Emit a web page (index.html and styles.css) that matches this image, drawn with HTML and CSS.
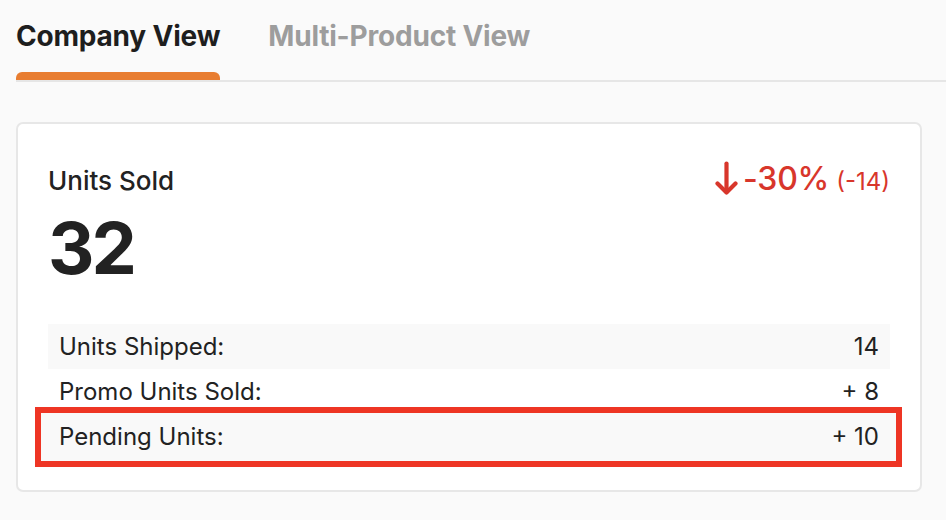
FILE: index.html
```html
<!DOCTYPE html>
<html lang="en">
<head>
<meta charset="utf-8">
<title>Units Sold</title>
<link rel="stylesheet" href="styles.css">
</head>
<body>
  <nav class="tabs">
    <div class="tab tab-active">Company View</div>
    <div class="tab">Multi-Product View</div>
  </nav>
  <section class="card">
    <div class="card-head">
      <div class="metric">
        <div class="metric-label">Units Sold</div>
        <div class="metric-value">32</div>
      </div>
      <div class="change">
        <svg class="change-icon" width="23" height="35" viewBox="0 0 23 35" aria-hidden="true">
          <path d="M11.5 2.5 V31" fill="none" stroke="#d8362b" stroke-width="4.2" stroke-linecap="round"/>
          <path d="M2.5 22.5 L11.5 31.5 L20.5 22.5" fill="none" stroke="#d8362b" stroke-width="4.2" stroke-linecap="round" stroke-linejoin="round"/>
        </svg>
        <span class="change-pct">-30%</span>
        <span class="change-abs">(-14)</span>
      </div>
    </div>
    <div class="rows">
      <div class="row row-shaded"><span>Units Shipped:</span><span>14</span></div>
      <div class="row"><span>Promo Units Sold:</span><span>+ 8</span></div>
      <div class="row row-shaded row-highlight"><span>Pending Units:</span><span>+ 10</span></div>
    </div>
  </section>
</body>
</html>
```
FILE: styles.css
```css
* { box-sizing: border-box; }
html, body { margin: 0; padding: 0; }
body {
  background: #fafafa;
  font-family: Inter, "Noto Sans", sans-serif;
  color: #222222;
  width: 946px;
  height: 520px;
  overflow: hidden;
}
.tabs {
  display: flex;
  gap: 48px;
  margin-left: 16px;
  border-bottom: 2px solid #e6e6e6;
  height: 82px;
}
.tab {
  position: relative;
  font-size: 28px;
  font-weight: 700;
  line-height: 34px;
  padding-top: 19px;
  color: #9d9d9d;
  letter-spacing: -0.2px;
}
.tab-active { color: #1e1e1e; }
.tab-active::after {
  content: "";
  position: absolute;
  left: 0;
  right: 0;
  bottom: 0;
  height: 8px;
  background: #e87d31;
  border-radius: 6px 6px 0 0;
}
.card {
  position: relative;
  z-index: 0;
  margin: 40px 24px 0 16px;
  background: #ffffff;
  border: 2px solid #e7e7e7;
  border-radius: 7px;
  padding: 41px 30px 30px 30px;
  height: 370px;
}
.card-head {
  display: flex;
  justify-content: space-between;
  align-items: flex-start;
}
.metric-label {
  font-size: 26px;
  line-height: 32px;
  font-weight: 500;
}
.metric-value {
  font-size: 72px;
  font-weight: 700;
  line-height: 80px;
  margin-top: 11px;
  letter-spacing: -3px;
}
.change {
  display: flex;
  align-items: baseline;
  color: #d8362b;
  margin-top: -4px;
}
.change-icon { align-self: flex-start; margin-right: 5px; }
.change-pct { font-size: 32px; font-weight: 500; line-height: 36px; letter-spacing: -0.2px; }
.change-abs { font-size: 24px; margin-left: 7px; }
.rows { margin-top: 36px; }
.row {
  position: relative;
  display: flex;
  justify-content: space-between;
  align-items: center;
  height: 45px;
  padding: 0 11px;
  font-size: 24px;
}
.row-shaded { background: #f9f9f9; }
.row-highlight::after {
  content: "";
  position: absolute;
  top: -7px;
  bottom: -8px;
  left: -13px;
  right: -12px;
  border: 6px solid #ee3524;
  background: #f9f9f9;
  z-index: -1;
}
```
